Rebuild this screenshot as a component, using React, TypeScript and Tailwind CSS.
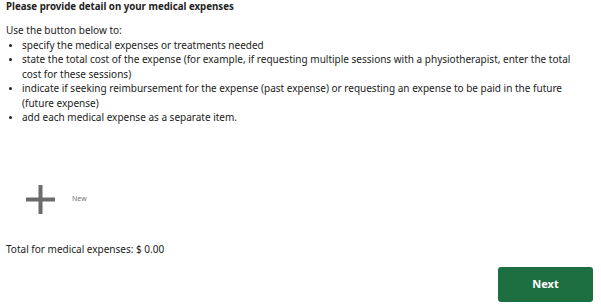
import React from "react";

const items = [
  "specify the medical expenses or treatments needed",
  "state the total cost of the expense (for example, if requesting multiple sessions with a physiotherapist, enter the total cost for these sessions)",
  "indicate if seeking reimbursement for the expense (past expense) or requesting an expense to be paid in the future (future expense)",
  "add each medical expense as a separate item.",
];

export default function App() {
  return (
    <div
      className="w-[601px] h-[304px] bg-white text-[#222] px-[6px] pt-px flex flex-col text-[10px] leading-[14.5px]"
      style={{ fontFamily: "'Noto Sans', sans-serif" }}
    >
      <h1 className="font-bold text-[9.7px] leading-[12px]">Please provide detail on your medical expenses</h1>

      <p className="mt-[10px]">Use the button below to:</p>
      <ul className="pr-[14px]">
        {items.map((t, i) => (
          <li key={i} className="flex">
            <span className="w-[16px] shrink-0 flex pl-[3px] pt-[6px]">
              <span className="block w-[3px] h-[3px] rounded-full bg-[#222]" />
            </span>
            <span>{t}</span>
          </li>
        ))}
      </ul>

      <div className="mt-[60px] flex items-center pl-[20px]">
        <svg width="29" height="29" viewBox="0 0 29 29">
          <rect x="12.5" y="0" width="4" height="29" fill="#6b6b6b" />
          <rect x="0" y="12.5" width="29" height="4" fill="#6b6b6b" />
        </svg>
        <span className="ml-[17px] text-[7px] text-[#777]">New</span>
      </div>

      <p className="mt-[28px]">Total for medical expenses: $ 0.00</p>

      <div className="flex justify-end mt-auto pb-[2px] pr-[2px]">
        <button className="w-[95px] h-[35px] rounded-[3px] bg-[#1d6f42] text-white font-bold text-[11px]">
          Next
        </button>
      </div>
    </div>
  );
}
